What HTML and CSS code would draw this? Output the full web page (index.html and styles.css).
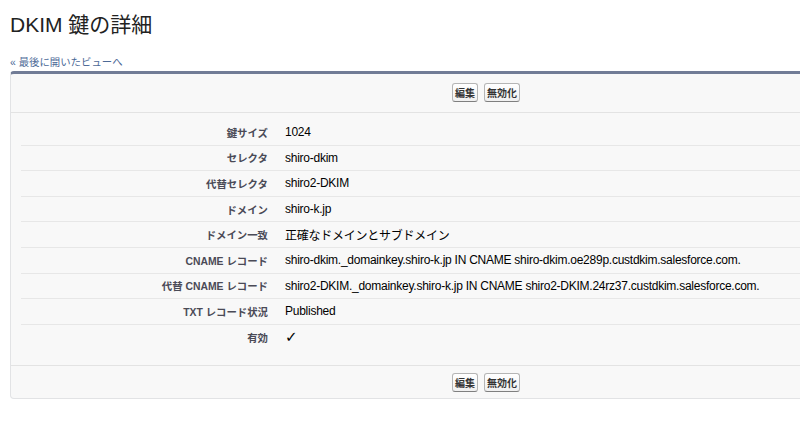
FILE: index.html
```html
<!DOCTYPE html>
<html lang="ja">
<head>
    <meta charset="UTF-8">
    <meta name="viewport" content="width=device-width, initial-scale=1.0">
    <title>DKIM 鍵の詳細</title>
    <link rel="stylesheet" href="styles.css">
</head>
<body>
    <h1 class="page-title">DKIM 鍵の詳細</h1>
    <a class="back-link" href="#">« 最後に開いたビューへ</a>

    <div class="detail-block">
        <div class="button-bar top">
            <button class="btn">編集</button>
            <button class="btn">無効化</button>
        </div>

        <div class="detail-list">
            <div class="row"><div class="label">鍵サイズ</div><div class="value">1024</div></div>
            <div class="row"><div class="label">セレクタ</div><div class="value">shiro-dkim</div></div>
            <div class="row"><div class="label">代替セレクタ</div><div class="value">shiro2-DKIM</div></div>
            <div class="row"><div class="label">ドメイン</div><div class="value">shiro-k.jp</div></div>
            <div class="row"><div class="label">ドメイン一致</div><div class="value">正確なドメインとサブドメイン</div></div>
            <div class="row"><div class="label">CNAME レコード</div><div class="value">shiro-dkim._domainkey.shiro-k.jp IN CNAME shiro-dkim.oe289p.custdkim.salesforce.com.</div></div>
            <div class="row"><div class="label">代替 CNAME レコード</div><div class="value">shiro2-DKIM._domainkey.shiro-k.jp IN CNAME shiro2-DKIM.24rz37.custdkim.salesforce.com.</div></div>
            <div class="row"><div class="label">TXT レコード状況</div><div class="value">Published</div></div>
            <div class="row last"><div class="label">有効</div><div class="value"><span class="check">✓</span></div></div>
        </div>

        <div class="button-bar bottom">
            <button class="btn">編集</button>
            <button class="btn">無効化</button>
        </div>
    </div>
</body>
</html>
```

FILE: styles.css
```css
html, body {
    overflow: hidden;
}
body {
    margin: 0;
    padding: 0 0 0 10px;
    font-family: "Liberation Sans", "Noto Sans CJK JP", Arial, sans-serif;
    color: #000;
    background-color: #fff;
}
.page-title {
    margin: 0;
    padding-top: 11px;
    font-size: 21px;
    font-weight: normal;
    line-height: 28px;
    color: #222;
}
.back-link {
    display: inline-block;
    margin-top: 17px;
    font-size: 10.4px;
    line-height: 14px;
    color: #4d6a97;
    text-decoration: none;
}

/* Detail block */
.detail-block {
    width: 950px;
    margin-top: 1px;
    background-color: #f8f8f8;
    border: 1px solid #e2e3e5;
    border-top: 3px solid #717c96;
    border-radius: 4px;
}
.button-bar {
    display: flex;
    justify-content: center;
    gap: 6px;
}
.button-bar.top {
    padding: 9px 0 10px;
    border-bottom: 1px solid #e3e3e3;
}
.button-bar.bottom {
    padding: 7px 0 6px;
    border-top: 1px solid #e3e3e3;
}
.btn {
    height: 19px;
    padding: 0 2px;
    font-family: "Noto Sans CJK JP", "Liberation Sans", sans-serif;
    font-size: 10px;
    font-weight: bold;
    color: #333;
    background: linear-gradient(#ffffff, #f0f0f0);
    border: 1px solid #b5b5b5;
    border-bottom-color: #7f7f7f;
    border-radius: 3px;
    cursor: pointer;
}

.detail-list {
    padding: 7px 0 16px 10px;
}
.row {
    display: flex;
    align-items: center;
    height: 24.6px;
    border-bottom: 1px solid #e7e7e7;
}
.row.last {
    border-bottom: none;
}
.label {
    width: 257px;
    padding-right: 10px;
    box-sizing: border-box;
    text-align: right;
    font-size: 10.4px;
    font-weight: bold;
    color: #4a4a56;
}
.value {
    padding-left: 7px;
    font-size: 12px;
    letter-spacing: -0.25px;
    color: #000;
    white-space: nowrap;
}
.check {
    font-size: 15px;
    font-weight: bold;
    font-family: "DejaVu Sans", sans-serif;
}
```
